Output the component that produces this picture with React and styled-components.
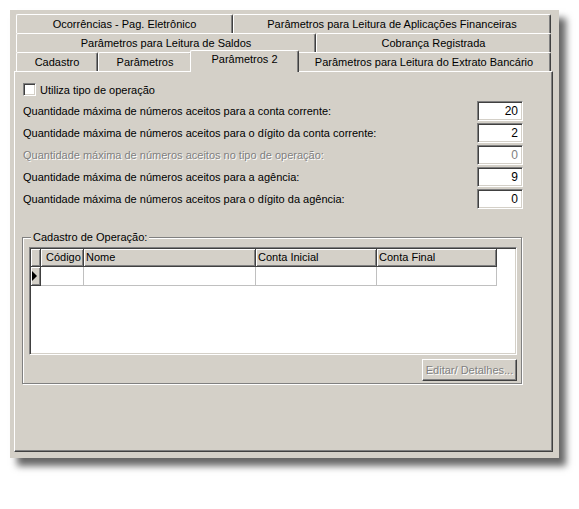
import React from 'react';
import styled, { createGlobalStyle } from 'styled-components';

const GlobalStyle = createGlobalStyle`
  body {
    margin: 0;
    background: #ffffff;
    font-family: "Liberation Sans", Arial, sans-serif;
    font-size: 11px;
    color: #000;
  }
`;

const Screen = styled.div`
  width: 579px;
  height: 509px;
  padding: 10px 0 0 10px;
  box-sizing: border-box;
`;

const Window = styled.div`
  width: 549px;
  height: 448px;
  box-sizing: border-box;
  background: #d4d0c8;
  padding: 4px 6px 6px 4px;
  box-shadow: 7px 8px 7px rgba(0, 0, 0, 0.6);
  display: flex;
  flex-direction: column;
`;

const TabStrip = styled.div`
  display: flex;
  flex-direction: column;
  padding: 0 2px;
`;

const TabRow = styled.div`
  display: flex;
  align-items: flex-start;
  height: 19px;
`;

const Tab = styled.div`
  width: ${p => p.w}px;
  height: 19px;
  box-sizing: border-box;
  border-top: 1px solid #ffffff;
  border-left: 1px solid #ffffff;
  border-right: 1px solid #404040;
  box-shadow: inset -1px 0 #808080;
  border-radius: 2px 2px 0 0;
  text-align: center;
  line-height: 18px;
  white-space: nowrap;
  background: #d4d0c8;
`;

const ActiveTab = styled(Tab)`
  position: relative;
  z-index: 2;
  width: ${p => p.w + 4}px;
  height: 22px;
  margin: -2px -2px 0;
  line-height: 17px;
  border-bottom: none;
`;

const Page = styled.div`
  flex: 1;
  box-sizing: border-box;
  border-top: 1px solid #ffffff;
  border-left: 1px solid #ffffff;
  border-right: 1px solid #404040;
  border-bottom: 1px solid #404040;
  box-shadow: inset -1px -1px #808080;
  padding: 11px 0 0 8px;
  display: flex;
  flex-direction: column;
`;

const CheckRow = styled.label`
  display: flex;
  align-items: center;
  gap: 4px;
  height: 13px;
`;

const CheckBox = styled.span`
  width: 13px;
  height: 13px;
  box-sizing: border-box;
  background: #ffffff;
  border-top: 1px solid #808080;
  border-left: 1px solid #808080;
  border-right: 1px solid #ffffff;
  border-bottom: 1px solid #ffffff;
  box-shadow: inset 1px 1px #404040, inset -1px -1px #d4d0c8;
`;

const Fields = styled.div`
  display: flex;
  flex-direction: column;
  gap: 2px;
  margin-top: 5px;
  width: 500px;
`;

const FieldRow = styled.div`
  display: flex;
  align-items: center;
  justify-content: space-between;
  height: 20px;
  color: ${p => (p.disabled ? '#808080' : '#000')};
  text-shadow: ${p => (p.disabled ? '1px 1px #ffffff' : 'none')};
`;

const NumBox = styled.div`
  width: 46px;
  height: 20px;
  box-sizing: border-box;
  background: #ffffff;
  border-top: 1px solid #808080;
  border-left: 1px solid #808080;
  border-right: 1px solid #ffffff;
  border-bottom: 1px solid #ffffff;
  box-shadow: inset 1px 1px #404040, inset -1px -1px #d4d0c8;
  text-align: right;
  padding-right: 4px;
  line-height: 18px;
  font-size: 12px;
  color: ${p => (p.disabled ? '#808080' : '#000')};
  text-shadow: none;
`;

const Group = styled.div`
  position: relative;
  width: 500px;
  height: 147px;
  box-sizing: border-box;
  margin: 28px 0 0 -1px;
  border: 1px solid #808080;
  box-shadow: inset 1px 1px #ffffff, 1px 1px #ffffff;
  padding: 9px 4px 0 6px;
  display: flex;
  flex-direction: column;
  align-items: flex-start;
`;

const Legend = styled.span`
  position: absolute;
  top: -7px;
  left: 8px;
  padding: 0 2px;
  background: #d4d0c8;
  line-height: 13px;
`;

const Grid = styled.div`
  width: 488px;
  height: 108px;
  box-sizing: border-box;
  background: #ffffff;
  border-top: 1px solid #808080;
  border-left: 1px solid #808080;
  border-right: 1px solid #ffffff;
  border-bottom: 1px solid #ffffff;
  box-shadow: inset 1px 1px #404040, inset -1px -1px #d4d0c8;
  padding: 1px;
  display: grid;
  grid-template-columns: 10px 43px 172px 121px 120px 1fr;
  grid-template-rows: 18px 19px;
  align-content: start;
`;

const HeadCell = styled.div`
  background: #d4d0c8;
  box-sizing: border-box;
  border-right: 1px solid #404040;
  border-bottom: 1px solid #404040;
  box-shadow: inset 1px 1px #ffffff, inset -1px -1px #808080;
  padding-left: ${p => p.pad || 2}px;
  line-height: 17px;
  white-space: nowrap;
  overflow: hidden;
`;

const Filler = styled.div`
  background: #ffffff;
`;

const Indicator = styled.div`
  background: #d4d0c8;
  box-sizing: border-box;
  border-right: 1px solid #404040;
  border-bottom: 1px solid #404040;
  box-shadow: inset 1px 1px #ffffff, inset -1px -1px #808080;
  display: flex;
  align-items: center;
  padding-left: 1px;
`;

const DataCell = styled.div`
  box-sizing: border-box;
  border-right: 1px solid #c0c0c0;
  border-bottom: 1px solid #c0c0c0;
  background: #ffffff;
`;

const ButtonBar = styled.div`
  align-self: flex-end;
  margin-top: 4px;
`;

const Button = styled.button`
  width: 95px;
  height: 22px;
  box-sizing: border-box;
  background: #d4d0c8;
  border-top: 1px solid #ffffff;
  border-left: 1px solid #ffffff;
  border-right: 1px solid #404040;
  border-bottom: 1px solid #404040;
  box-shadow: inset -1px -1px #808080;
  font-family: "Liberation Sans", Arial, sans-serif;
  font-size: 11px;
  color: #808080;
  text-shadow: 1px 1px #ffffff;
  padding: 0;
`;

const tabRows = [
  [
    { label: 'Ocorrências - Pag. Eletrônico', w: 217 },
    { label: 'Parâmetros para Leitura de Aplicações Financeiras', w: 318 },
  ],
  [
    { label: 'Parâmetros para Leitura de Saldos', w: 300 },
    { label: 'Cobrança Registrada', w: 235 },
  ],
  [
    { label: 'Cadastro', w: 82 },
    { label: 'Parâmetros', w: 94 },
    { label: 'Parâmetros 2', w: 105, active: true },
    { label: 'Parâmetros para Leitura do Extrato Bancário', w: 254 },
  ],
];

const fields = [
  { label: 'Quantidade máxima de números aceitos para a conta corrente:', value: '20' },
  { label: 'Quantidade máxima de números aceitos para o dígito da conta corrente:', value: '2' },
  { label: 'Quantidade máxima de números aceitos no tipo de operação:', value: '0', disabled: true },
  { label: 'Quantidade máxima de números aceitos para a agência:', value: '9' },
  { label: 'Quantidade máxima de números aceitos para o dígito da agência:', value: '0' },
];

const columns = [
  { label: 'Código', pad: 5 },
  { label: 'Nome' },
  { label: 'Conta Inicial' },
  { label: 'Conta Final' },
];

export default function App() {
  return (
    <Screen>
      <GlobalStyle />
      <Window>
        <TabStrip>
          {tabRows.map((row, i) => (
            <TabRow key={i}>
              {row.map(t =>
                t.active ? (
                  <ActiveTab key={t.label} w={t.w}>{t.label}</ActiveTab>
                ) : (
                  <Tab key={t.label} w={t.w}>{t.label}</Tab>
                )
              )}
            </TabRow>
          ))}
        </TabStrip>
        <Page>
          <CheckRow>
            <CheckBox />
            Utiliza tipo de operação
          </CheckRow>
          <Fields>
            {fields.map(f => (
              <FieldRow key={f.label} disabled={f.disabled}>
                <span>{f.label}</span>
                <NumBox disabled={f.disabled}>{f.value}</NumBox>
              </FieldRow>
            ))}
          </Fields>
          <Group>
            <Legend>Cadastro de Operação:</Legend>
            <Grid>
              <HeadCell />
              {columns.map(c => (
                <HeadCell key={c.label} pad={c.pad}>{c.label}</HeadCell>
              ))}
              <Filler />
              <Indicator>
                <svg width="6" height="10" viewBox="0 0 6 10">
                  <path d="M0 0 L5 5 L0 10 Z" fill="#000" />
                </svg>
              </Indicator>
              <DataCell />
              <DataCell />
              <DataCell />
              <DataCell />
              <Filler />
            </Grid>
            <ButtonBar>
              <Button disabled>Editar/ Detalhes...</Button>
            </ButtonBar>
          </Group>
        </Page>
      </Window>
    </Screen>
  );
}
